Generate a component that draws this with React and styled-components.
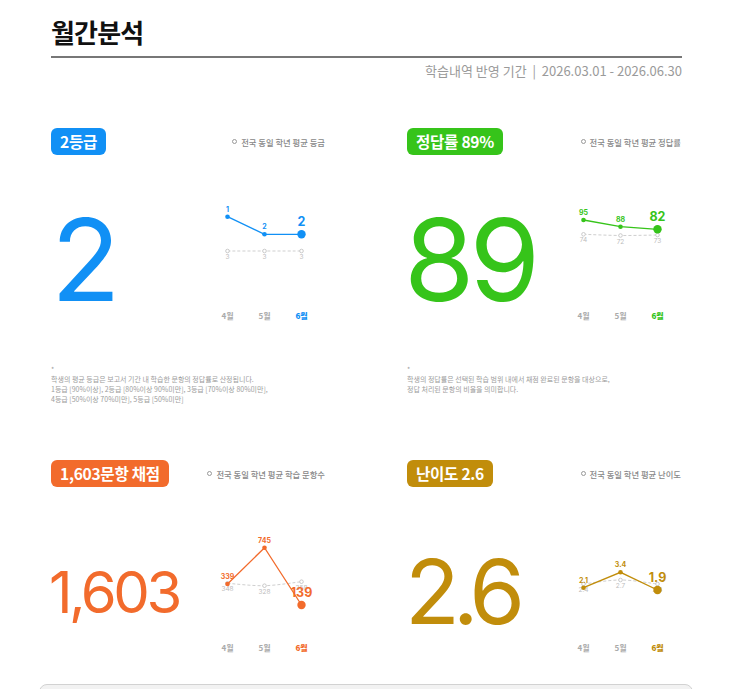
import styled, { createGlobalStyle } from 'styled-components';

const GlobalStyle = createGlobalStyle`
  html, body {
    margin: 0;
    padding: 0;
    background: #fff;
    overflow: hidden;
  }
  body {
    font-family: "Noto Sans CJK KR", "Noto Sans", sans-serif;
  }
`;

const Page = styled.div`
  padding: 0 61px 0 51px;
`;

const Title = styled.h1`
  margin: 15px 0 0;
  padding-bottom: 7px;
  border-bottom: 2px solid #777;
  font-size: 26px;
  line-height: 34px;
  font-weight: 700;
  letter-spacing: -0.8px;
  color: #111;
`;

const Period = styled.div`
  margin-top: 4px;
  text-align: right;
  font-size: 13px;
  line-height: 18px;
  color: #9a9a9a;
`;

const Grid = styled.div`
  margin-top: 48px;
  display: grid;
  grid-template-columns: 274px 274px;
  column-gap: 82px;
  row-gap: 56px;
`;

const Card = styled.section`
  display: flex;
  flex-direction: column;
`;

const Header = styled.div`
  display: flex;
  align-items: center;
  justify-content: space-between;
  height: 27px;
`;

const Badge = styled.span`
  height: 27px;
  padding: 0 9px;
  border-radius: 6px;
  background: ${p => p.$color};
  color: #fff;
  font-size: 15.6px;
  font-weight: 700;
  line-height: 27px;
  letter-spacing: -0.3px;
`;

const Legend = styled.span`
  display: flex;
  align-items: center;
  gap: 4px;
  font-size: 8.3px;
  line-height: 12px;
  font-weight: 500;
  color: #888;

  &::before {
    content: '';
    width: 3px;
    height: 3px;
    border: 1px solid #999;
    border-radius: 50%;
  }
`;

const Body = styled.div`
  display: flex;
  height: 172px;
`;

const BigNumber = styled.div`
  flex: 1;
  display: flex;
  align-items: center;
  padding-top: 38px;
  margin-left: ${p => p.$shift}px;
  font-family: Inter, "Noto Sans", sans-serif;
  font-size: ${p => p.$size}px;
  font-weight: 400;
  line-height: 1;
  letter-spacing: ${p => p.$track}em;
  color: ${p => p.$color};
`;

const ChartCol = styled.div`
  width: 111px;
  margin-right: 5px;
  display: flex;
  flex-direction: column;
`;

const ChartSvg = styled.svg`
  display: block;
  width: 111px;
  height: 150px;
  overflow: visible;
  font-family: Inter, "Noto Sans", sans-serif;
`;

const Months = styled.div`
  display: grid;
  grid-template-columns: repeat(3, 37px);
  height: 22px;
`;

const Month = styled.span`
  text-align: center;
  font-size: 8px;
  line-height: 22px;
  font-weight: ${p => (p.$current ? 800 : 600)};
  color: ${p => (p.$current ? p.$color : '#aaa')};
`;

const Note = styled.div`
  margin-top: 37px;
  font-size: 7px;
  line-height: 10px;
  color: #9d9d9d;
`;

const Panel = styled.div`
  margin: 25px -11px 0 -12px;
  height: 40px;
  border: 1px solid #d2d2d2;
  border-radius: 8px;
  background: #f2f2f2;
`;

const XS = [18.5, 55.5, 92.5];
const MONTHS = ['4월', '5월', '6월'];

const cards = [
  {
    badge: '2등급',
    legend: '전국 동일 학년 평균 등급',
    color: '#1190f5',
    value: '2',
    size: 114,
    track: -0.04,
    shift: 0,
    points: [
      { v: '1', y: 61.7 },
      { v: '2', y: 79.3 },
      { v: '2', y: 79.3 },
    ],
    avg: [
      { v: '3', y: 96 },
      { v: '3', y: 96 },
      { v: '3', y: 96 },
    ],
    note: [
      '*',
      '학생의 평균 등급은 보고서 기간 내 학습한 문항의 정답률로 산정됩니다.',
      '1등급 [90%이상], 2등급 [80%이상 90%미만], 3등급 [70%이상 80%미만],',
      '4등급 [50%이상 70%미만], 5등급 [50%미만]',
    ],
  },
  {
    badge: '정답률 89%',
    legend: '전국 동일 학년 평균 정답률',
    color: '#36c41a',
    value: '89',
    size: 114,
    track: -0.045,
    shift: -3,
    points: [
      { v: '95', y: 65 },
      { v: '88', y: 71.7 },
      { v: '82', y: 74.3 },
    ],
    avg: [
      { v: '74', y: 79.3 },
      { v: '72', y: 80.5 },
      { v: '73', y: 80 },
    ],
    note: [
      '*',
      '학생의 정답률은 선택된 학습 범위 내에서 채점 완료된 문항을 대상으로,',
      '정답 처리된 문항의 비율을 의미합니다.',
    ],
  },
  {
    badge: '1,603문항 채점',
    legend: '전국 동일 학년 평균 학습 문항수',
    color: '#f26b2c',
    value: '1,603',
    size: 58,
    track: -0.06,
    shift: -2,
    points: [
      { v: '339', y: 97 },
      { v: '745', y: 60.7 },
      { v: '139', y: 118 },
    ],
    avg: [
      { v: '348', y: 96.3 },
      { v: '328', y: 98.7 },
      { v: '358', y: 94.7 },
    ],
  },
  {
    badge: '난이도 2.6',
    legend: '전국 동일 학년 평균 난이도',
    color: '#c18d0b',
    value: '2.6',
    size: 90,
    track: -0.08,
    shift: -2,
    points: [
      { v: '2.1', y: 100.7 },
      { v: '3.4', y: 85.3 },
      { v: '1.9', y: 103 },
    ],
    avg: [
      { v: '2.4', y: 97 },
      { v: '2.7', y: 93 },
      { v: '2.4', y: 97 },
    ],
  },
];

// Catmull-Rom 곡선으로 평균선 그리기
const smoothPath = pts =>
  pts.reduce((d, p, i, a) => {
    if (i === 0) return `M${p.x},${p.y}`;
    const p0 = a[i - 2] || a[i - 1];
    const p1 = a[i - 1];
    const p3 = a[i + 1] || p;
    const c1x = p1.x + (p.x - p0.x) / 6;
    const c1y = p1.y + (p.y - p0.y) / 6;
    const c2x = p.x - (p3.x - p1.x) / 6;
    const c2y = p.y - (p3.y - p1.y) / 6;
    return `${d} C${c1x},${c1y} ${c2x},${c2y} ${p.x},${p.y}`;
  }, '');

const Chart = ({ color, points, avg }) => {
  const main = points.map((p, i) => ({ x: XS[i], y: p.y }));
  const mean = avg.map((p, i) => ({ x: XS[i], y: p.y }));
  const last = points.length - 1;

  return (
    <ChartCol>
      <ChartSvg viewBox="0 0 111 150">
        <path d={smoothPath(mean)} fill="none" stroke="#cfcfcf" strokeWidth="1" strokeDasharray="3 2" />
        {mean.map((p, i) => (
          <g key={`a${i}`}>
            <circle cx={p.x} cy={p.y} r="1.8" fill="#fff" stroke="#c4c4c4" strokeWidth="0.9" />
            <text x={p.x} y={p.y + 6} textAnchor="middle" dominantBaseline="central" fontSize="6.5" fill="#bdbdbd">
              {avg[i].v}
            </text>
          </g>
        ))}
        <polyline
          points={main.map(p => `${p.x},${p.y}`).join(' ')}
          fill="none"
          stroke={color}
          strokeWidth="1.3"
        />
        {main.map((p, i) => (
          <g key={`p${i}`}>
            <circle cx={p.x} cy={p.y} r={i === last ? 4.2 : 2.3} fill={color} />
            <text
              x={p.x}
              y={p.y - (i === last ? 12.5 : 7.5)}
              textAnchor="middle"
              dominantBaseline="central"
              fontSize={i === last ? 12.5 : 7}
              fontWeight="700"
              fill={color}
            >
              {points[i].v}
            </text>
          </g>
        ))}
      </ChartSvg>
      <Months>
        {MONTHS.map((m, i) => (
          <Month key={m} $current={i === last} $color={color}>
            {m}
          </Month>
        ))}
      </Months>
    </ChartCol>
  );
};

const App = () => (
  <Page>
    <GlobalStyle />
    <Title>월간분석</Title>
    <Period>학습내역 반영 기간 &nbsp;|&nbsp; 2026.03.01 - 2026.06.30</Period>

    <Grid>
      {cards.map(card => (
        <Card key={card.badge}>
          <Header>
            <Badge $color={card.color}>{card.badge}</Badge>
            <Legend>{card.legend}</Legend>
          </Header>
          <Body>
            <BigNumber $size={card.size} $track={card.track} $shift={card.shift} $color={card.color}>
              {card.value}
            </BigNumber>
            <Chart color={card.color} points={card.points} avg={card.avg} />
          </Body>
          {card.note && (
            <Note>
              {card.note.map(line => (
                <div key={line}>{line}</div>
              ))}
            </Note>
          )}
        </Card>
      ))}
    </Grid>

    <Panel />
  </Page>
);

export default App;
